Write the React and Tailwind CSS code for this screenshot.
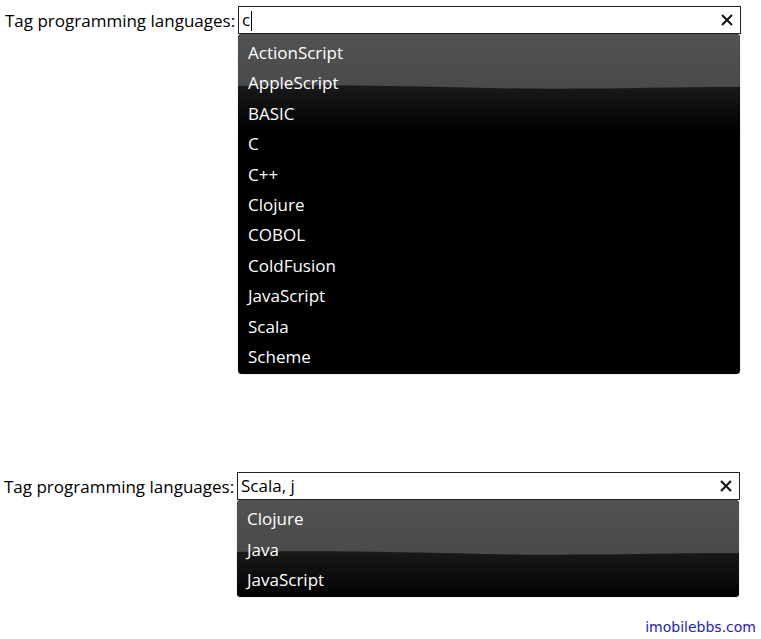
import { useState } from 'react'

const FIRST = [
  'ActionScript',
  'AppleScript',
  'BASIC',
  'C',
  'C++',
  'Clojure',
  'COBOL',
  'ColdFusion',
  'JavaScript',
  'Scala',
  'Scheme',
]

const SECOND = ['Clojure', 'Java', 'JavaScript']

/**
 * Glossy backdrop of the suggestion list: flat grey top with a soft wave,
 * then a dark band fading out to black.
 */
function Gloss() {
  return (
    <svg
      className="absolute left-0 top-0 w-full h-[100px] pointer-events-none"
      viewBox="0 0 502 100"
      preserveAspectRatio="none"
    >
      <defs>
        <linearGradient id="shine" x1="0" y1="0" x2="0" y2="1">
          <stop offset="0" stopColor="#525252" />
          <stop offset="1" stopColor="#4a4a4a" />
        </linearGradient>
        <linearGradient id="shade" x1="0" y1="0" x2="0" y2="1">
          <stop offset="0" stopColor="#1d1d1d" />
          <stop offset="1" stopColor="#000000" />
        </linearGradient>
      </defs>
      <rect x="0" y="45" width="502" height="55" fill="url(#shade)" />
      <path
        d="M0 0 H502 V53 C420 53 340 56 250 54 C170 52 80 50 0 52 Z"
        fill="url(#shine)"
      />
    </svg>
  )
}

function ClearIcon() {
  return (
    <svg width="12" height="12" viewBox="0 0 12 12" className="shrink-0">
      <path d="M1 1 L11 11 M11 1 L1 11" stroke="#111" strokeWidth="2" />
    </svg>
  )
}

function TagBox({ value, caret, items }) {
  const [text] = useState(value)

  return (
    <div className="flex items-start">
      <span className="w-[233px] shrink-0 h-[28px] pt-[1px] leading-[28px] text-[17px] text-black whitespace-nowrap">
        Tag programming languages:
      </span>
      <div className="w-[503px]">
        {/* Input */}
        <div className="h-[28px] border border-[#222] bg-white flex items-center pl-[3px] pr-[7px]">
          <span className="flex-1 text-[17px] leading-[26px] text-black whitespace-pre">
            {text}
            {caret && <span className="inline-block w-px h-[20px] bg-black align-middle ml-px" />}
          </span>
          <ClearIcon />
        </div>

        {/* Suggestions */}
        <div className="relative w-[502px] overflow-hidden rounded-[4px] bg-black pt-[4px] pb-[2px] shadow-[0_0_1px_rgba(0,0,0,0.5)]">
          <Gloss />
          {items.map((item) => (
            <div
              key={item}
              className="relative h-[30.4px] leading-[30.4px] pl-[10px] text-[17px] text-white"
            >
              {item}
            </div>
          ))}
        </div>
      </div>
    </div>
  )
}

export default function App() {
  return (
    <div
      className="relative w-[761px] h-[639px] bg-white overflow-hidden pl-[5px] pt-[6px]"
      style={{ fontFamily: '"Open Sans", "Noto Sans", sans-serif' }}
    >
      <TagBox value="c" caret items={FIRST} />

      <div className="mt-[98px] -ml-[1px]">
        <TagBox value="Scala, j" items={SECOND} />
      </div>

      <div className="mt-[20px] pr-[5px] text-right text-[14px] text-[#1c1cc8] font-['DejaVu_Sans',sans-serif]">
        imobilebbs.com
      </div>
    </div>
  )
}
